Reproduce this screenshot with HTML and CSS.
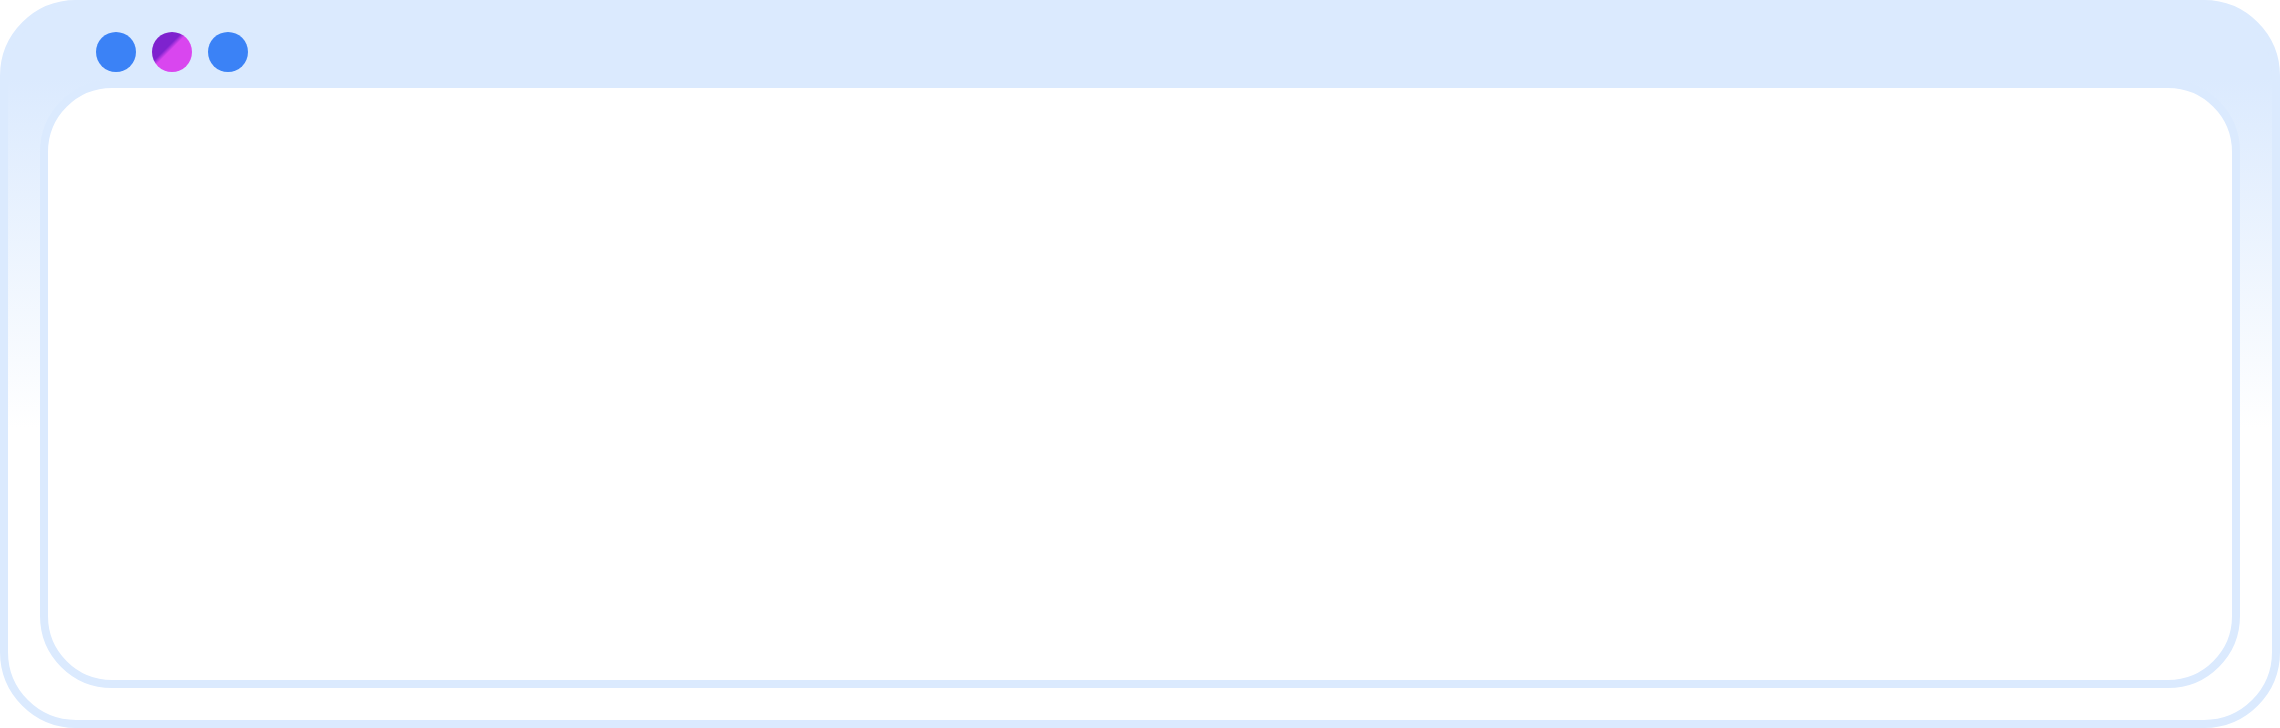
FILE: index.html
```html
<!DOCTYPE html>
<html lang="en">
<head>
<meta charset="utf-8">
<title>Window</title>
<link rel="stylesheet" href="styles.css">
</head>
<body>
  <div class="window">
    <div class="titlebar">
      <span class="dot dot-blue"></span>
      <span class="dot dot-grad"></span>
      <span class="dot dot-blue"></span>
    </div>
    <div class="content"></div>
  </div>
</body>
</html>
```

FILE: styles.css
```css
html, body {
  margin: 0;
  padding: 0;
  background: #ffffff;
  font-family: "Liberation Sans", Arial, sans-serif;
}

.window {
  box-sizing: border-box;
  width: 2280px;
  height: 728px;
  border: 8px solid #dbeafe;
  border-radius: 76px;
  background: linear-gradient(180deg, #dbeafe 0px, #dbeafe 70px, #ffffff 420px);
  display: flex;
  flex-direction: column;
}

.titlebar {
  box-sizing: border-box;
  height: 72px;
  padding: 24px 0 8px 88px;
  display: flex;
  gap: 16px;
  align-items: flex-start;
}

.dot {
  width: 40px;
  height: 40px;
  border-radius: 50%;
  display: block;
}

.dot-blue {
  background: #3b82f6;
}

.dot-grad {
  background: linear-gradient(135deg, #7e22ce 0%, #7e22ce 38%, #d946ef 46%, #d946ef 100%);
}

.content {
  flex: 1;
  margin: 0 32px 32px 32px;
  border: 8px solid #dbeafe;
  border-radius: 72px;
  background: #ffffff;
}
```
